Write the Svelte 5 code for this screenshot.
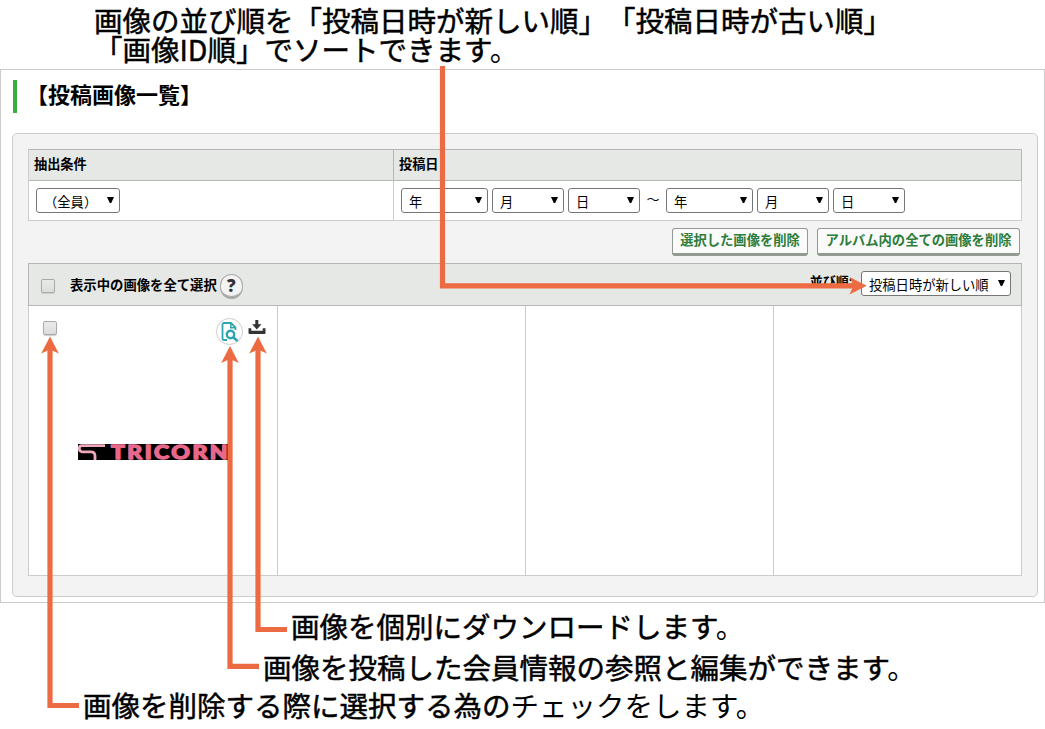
<script>
	let allChecked = $state(false);
	let checked = $state(false);

	const columns = [0, 1, 2, 3];

	// tips of the three callouts that point up into the list
	const pointers = [
		{ x: 50, top: 336.5, bottom: 705.5, end: 79 },
		{ x: 230, top: 346, bottom: 666.3, end: 259 },
		{ x: 258, top: 336.5, bottom: 629.5, end: 287 }
	];
</script>

{#snippet picker(label, size)}
	<span class="picker {size}">
		<select>
			<option>{label}</option>
		</select>
	</span>
{/snippet}

<div class="page">
	<div class="intro">
		<p class="note">画像の並び順を「投稿日時が新しい順」「投稿日時が古い順」</p>
		<p class="note">「画像ID順」でソートできます<span class="thin">。</span></p>
	</div>

	<main class="window">
		<h1 class="title">【投稿画像一覧】</h1>

		<div class="box">
			<div class="filter">
				<div class="filter-head">抽出条件</div>
				<div class="filter-head">投稿日</div>
				<div class="filter-cell">{@render picker('（全員）', 'member')}</div>
				<div class="filter-cell dates">
					{@render picker('年', 'year')}
					{@render picker('月', 'month')}
					{@render picker('日', 'month')}
					<span class="tilde">～</span>
					{@render picker('年', 'year')}
					{@render picker('月', 'month')}
					{@render picker('日', 'month')}
				</div>
			</div>

			<div class="actions">
				<button>選択した画像を削除</button>
				<button class="wide">アルバム内の全ての画像を削除</button>
			</div>

			<div class="list">
				<div class="list-head">
					<input type="checkbox" bind:checked={allChecked} />
					<span class="all">表示中の画像を全て選択</span>
					<span class="help">?</span>
					<span class="sort">並び順:</span>
					{@render picker('投稿日時が新しい順', 'order')}
				</div>
				<div class="cells">
					{#each columns as column}
						<div class="cell">
							{#if column === 0}
								<div class="tools">
									<input type="checkbox" bind:checked />
									<span class="member-link">
										<svg width="18" height="20" viewBox="0 0 18 20" fill="none" stroke="#2fa5b0">
											<path d="M6 18H3Q1.5 18 1.5 16.5V2.5Q1.5 1 3 1H10L14.5 5.5V8" stroke-width="1.8" />
											<path d="M9.8 1V5.8H14.8" stroke-width="1.5" />
											<circle cx="9.5" cy="12.5" r="3.7" stroke-width="2.4" />
											<path d="M12.3 15.2L16.5 19" stroke-width="2.6" />
										</svg>
									</span>
									<svg class="download" width="18" height="15" viewBox="0 0 18 15" fill="#333">
										<path d="M7.3 0H10.3V4.2H13.5L8.8 9.4L4.1 4.2H7.3Z" />
										<path d="M0.5 8.3H3.3V10.7H14.7V8.3H17.5V13Q17.5 14 16.5 14H1.5Q0.5 14 0.5 13Z" />
									</svg>
								</div>
								<svg class="thumb" width="152" height="16" viewBox="0 0 152 16">
									<rect width="152" height="16" fill="#000" />
									<path d="M27 1.7H4Q1.3 1.7 1.3 4.5T4 7.8H13Q17 7.8 17 12V16" fill="none" stroke="#efa9ba" stroke-width="2.8" />
									<text x="33" y="14.6" textLength="119" lengthAdjust="spacingAndGlyphs">TRICORN</text>
								</svg>
							{/if}
						</div>
					{/each}
				</div>
			</div>
		</div>
	</main>

	<div class="notes">
		<p class="note download-note">画像を個別にダウンロードします<span class="thin">。</span></p>
		<p class="note member-note">画像を投稿した会員情報の参照と編集ができます<span class="thin">。</span></p>
		<p class="note check-note">画像を削除する際に選択する為の<span class="thin">チェックをします。</span></p>
	</div>

	<svg class="arrows" width="1045" height="729" viewBox="0 0 1045 729">
		<path class="line" d="M442.5 66V285.8H855" />
		<path class="head" d="M866.7 285.8L849.5 277L853.5 285.8L849.5 294.6Z" />
		{#each pointers as p}
			<path class="line" d="M{p.x} {p.top + 12}V{p.bottom}H{p.end}" />
			<path class="head" d="M{p.x} {p.top}l-8.8 17l8.8 -4l8.8 4Z" />
		{/each}
	</svg>
</div>

<style>
	:global(body) {
		margin: 0;
		background: #fff;
	}
	.page {
		position: relative;
		width: 1045px;
		height: 729px;
		overflow: hidden;
		box-sizing: border-box;
		font-family: 'Noto Sans CJK JP', sans-serif;
		font-size: 13px;
		text-spacing-trim: space-all;
		color: #000;
	}
	.page * {
		box-sizing: border-box;
	}
	.note {
		margin: 0;
		font-size: 28.5px;
		line-height: 28.5px;
		white-space: nowrap;
		-webkit-text-stroke: 0.5px #000;
	}
	.thin {
		-webkit-text-stroke: 0;
	}
	.intro {
		height: 69px;
		padding: 6px 0 0 94px;
	}
	.window {
		height: 534px;
		padding: 10px 6px 0 11px;
		border: 1px solid #ccc;
	}
	.title {
		height: 33px;
		margin: 0 0 20px 1px;
		padding-left: 9px;
		border-left: 4px solid #37ae3f;
		font-size: 22px;
		line-height: 26px;
		font-weight: 700;
	}
	.box {
		height: 464px;
		padding: 15px;
		background: #f3f3f3;
		border: 1px solid #ccc;
		border-radius: 5px;
	}
	.filter {
		display: grid;
		grid-template-columns: 365px 1fr;
		grid-template-rows: 31px 40px;
		width: 994px;
		border-left: 1px solid #ccc;
		border-top: 1px solid #b5b7b5;
	}
	.filter-head {
		padding-left: 5px;
		background: #e5e8e5;
		border-right: 1px solid #b5b7b5;
		border-bottom: 1px solid #b5b7b5;
		font-size: 13.2px;
		font-weight: 700;
		line-height: 28px;
	}
	.filter-cell {
		display: flex;
		padding: 7px;
		background: #fff;
		border-right: 1px solid #ccc;
		border-bottom: 1px solid #ccc;
	}
	.dates {
		gap: 4px;
	}
	.tilde {
		width: 18px;
		text-align: center;
		line-height: 22px;
	}
	.picker {
		display: block;
		position: relative;
		height: 25px;
	}
	.picker::after {
		content: '';
		position: absolute;
		right: 6px;
		top: 9px;
		width: 7px;
		height: 6px;
		background: #000;
		clip-path: polygon(0 0, 100% 0, 60% 100%, 40% 100%);
		pointer-events: none;
	}
	.picker select {
		appearance: none;
		width: 100%;
		height: 25px;
		margin: 0;
		padding: 2px 7px 0;
		background: #fff;
		border: 1px solid #767676;
		border-radius: 3px;
		font: 13.3px/20px 'Noto Sans CJK JP', sans-serif;
		color: #000;
	}
	.member {
		width: 84px;
	}
	.year {
		width: 87px;
	}
	.month {
		width: 72px;
	}
	.order {
		width: 150px;
	}
	.actions {
		display: flex;
		justify-content: flex-end;
		gap: 9px;
		height: 42px;
		padding: 7px 2px 0 0;
	}
	.actions button {
		width: 136px;
		height: 28px;
		padding: 0 0 2px;
		background: #fafafa;
		border: 1px solid #929a92;
		border-bottom-width: 3px;
		border-radius: 3px;
		font: 700 13.3px/20px 'Noto Sans CJK JP', sans-serif;
		color: #2d7d3a;
		white-space: nowrap;
	}
	.actions .wide {
		width: 203px;
	}
	.list {
		width: 994px;
	}
	.list-head {
		display: flex;
		align-items: flex-start;
		height: 43px;
		padding: 7px 10px 0 12px;
		background: #e5e8e5;
		border: 1px solid #b5b7b5;
		font-weight: 700;
	}
	input {
		appearance: none;
		width: 14px;
		height: 14px;
		margin: 0;
		border: 1px solid #aaa;
		border-radius: 2px;
		background: linear-gradient(#eaeaea, #dcdcdc);
		box-shadow: 0 1px 1px #ccc;
	}
	.list-head input {
		margin-top: 8px;
	}
	.all {
		margin: 4px 3px 0 15px;
		font-size: 13.35px;
		line-height: 20px;
	}
	.help {
		width: 23px;
		height: 25px;
		margin-top: 3px;
		border: 1px solid #aaa;
		border-bottom-width: 3px;
		border-radius: 12px;
		background: #f3f3f3;
		font: 800 17px/22px 'Open Sans', sans-serif;
		text-align: center;
		color: #333;
	}
	.sort {
		margin: 0 8px 0 auto;
		line-height: 20px;
	}
	.cells {
		display: grid;
		grid-template-columns: 249px 248px 248px 248px;
		height: 270px;
		border-left: 1px solid #ccc;
	}
	.cell {
		background: #fff;
		border-right: 1px solid #ccc;
		border-bottom: 1px solid #ccc;
	}
	.tools {
		display: flex;
		height: 138px;
		padding: 12px 11px 0 14px;
	}
	.tools input {
		margin-top: 3px;
	}
	.member-link {
		display: flex;
		align-items: center;
		justify-content: center;
		width: 27px;
		height: 27px;
		margin-left: auto;
		border: 1px solid #ccc;
		border-radius: 50%;
	}
	.download {
		margin: 2px 0 0 5px;
	}
	.thumb {
		display: block;
		margin-left: 49px;
		overflow: visible;
	}
	.thumb text {
		font: 900 18.5px Lato, sans-serif;
		letter-spacing: 2px;
		fill: #e8688c;
		stroke: #e8688c;
		stroke-width: 1.3px;
		stroke-linejoin: round;
	}
	.notes {
		padding-top: 9px;
	}
	.download-note {
		padding-left: 291px;
	}
	.member-note {
		margin-top: 12px;
		padding-left: 263px;
	}
	.check-note {
		margin-top: 10px;
		padding-left: 83px;
	}
	.arrows {
		position: absolute;
		left: 0;
		top: 0;
		pointer-events: none;
	}
	.line {
		fill: none;
		stroke: #ed6b42;
		stroke-width: 5.2px;
	}
	.head {
		fill: #ed6b42;
	}
</style>
